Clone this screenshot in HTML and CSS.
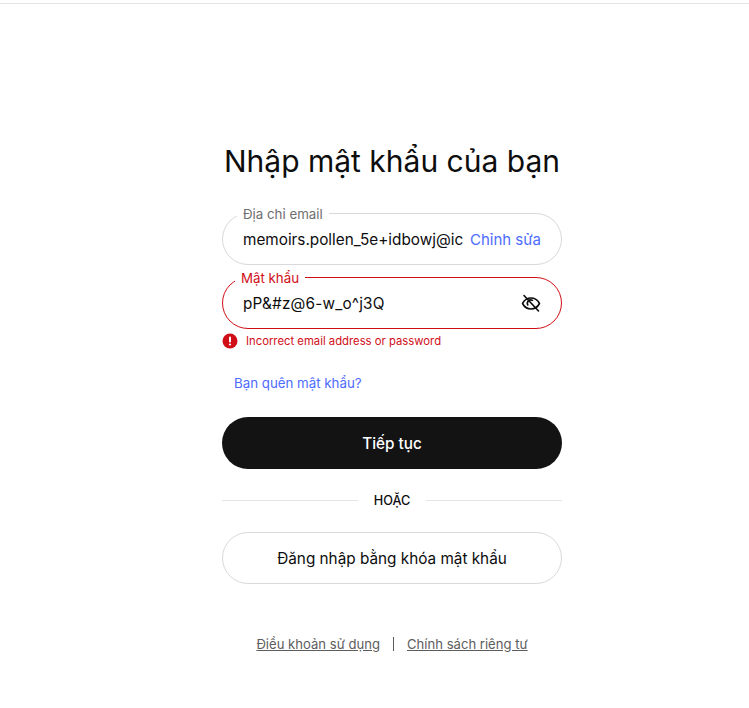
FILE: index.html
```html
<!DOCTYPE html>
<html lang="vi">
  <head>
    <meta charset="UTF-8" />
    <meta name="viewport" content="width=device-width, initial-scale=1.0" />
    <link rel="stylesheet" href="styles.css">
    <title>Nhập mật khẩu của bạn</title>
  </head>
  <body>
    <div class="top-line"></div>
    <main class="login">
      <h1 class="title">Nhập mật khẩu của bạn</h1>

      <div class="field">
        <span class="field-label">Địa chỉ email</span>
        <span class="field-value">memoirs.pollen_5e+idbowj@ic</span>
        <a class="link edit" href="#">Chỉnh sửa</a>
      </div>

      <div class="field field-error">
        <span class="field-label">Mật khẩu</span>
        <span class="field-value password">pP&amp;#z@6-w_o^j3Q</span>
        <svg class="eye" viewBox="0 0 20 20" width="20" height="20" fill="none" stroke="#0d0d0d" stroke-width="1.6" stroke-linecap="round" stroke-linejoin="round">
          <path d="M1.500 10.500C3.500 6.800 6.500 5 10 5s6.500 1.800 8.500 5.500c-2 3.700-5 5.500-8.500 5.500s-6.500-1.800-8.500-5.500z" />
          <path d="M6.800 12A3.400 3.400 0 0 1 11.500 7.400" />
          <path d="M3 2.500l14.500 15.500" />
        </svg>
      </div>

      <div class="error">
        <svg class="error-icon" viewBox="0 0 16 16" width="16" height="16">
          <circle cx="8" cy="8" r="7.500" fill="#d00e17" />
          <rect x="7" y="3.500" width="2" height="6" rx="1" fill="#fff" />
          <circle cx="8" cy="11.500" r="1.100" fill="#fff" />
        </svg>
        <span>Incorrect email address or password</span>
      </div>

      <a class="link forgot" href="#">Bạn quên mật khẩu?</a>

      <button class="btn btn-dark">Tiếp tục</button>

      <div class="divider"><span>HOẶC</span></div>

      <button class="btn btn-light">Đăng nhập bằng khóa mật khẩu</button>

      <footer class="footer">
        <a href="#">Điều khoản sử dụng</a>
        <span class="sep"></span>
        <a href="#">Chính sách riêng tư</a>
      </footer>
    </main>
  </body>
</html>
```

FILE: styles.css
```css
html,
body {
  margin: 0;
  padding: 0;
  background: #fff;
  font-family: Inter, "Liberation Sans", sans-serif;
  color: #0d0d0d;
}

.top-line {
  height: 3px;
  border-bottom: 1px solid #e3e3e3;
}

.login {
  width: 340px;
  margin-left: 222px;
  display: flex;
  flex-direction: column;
}

.title {
  margin: 138px -10px 0;
  font-size: 30px;
  line-height: 38px;
  font-weight: 400;
  text-align: center;
  white-space: nowrap;
}

.field {
  position: relative;
  box-sizing: border-box;
  height: 52px;
  margin-top: 33px;
  padding: 0 20px;
  display: flex;
  align-items: center;
  justify-content: space-between;
  border: 1px solid #d9d9d9;
  border-radius: 26px;
  font-size: 15.300px;
}

.field-error {
  margin-top: 12px;
  border-color: #d00e17;
}

.field-label {
  position: absolute;
  top: -8px;
  left: 14px;
  padding: 0 6px;
  background: #fff;
  font-size: 13.300px;
  line-height: 16px;
  color: #6e6e6e;
}

.field-error .field-label {
  left: 12px;
  color: #d00e17;
}

.field-value {
  white-space: nowrap;
}

.password {
  letter-spacing: 0.2px;
}

.link {
  color: #4d6bfe;
  text-decoration: none;
}

.edit {
  font-size: 15px;
  white-space: nowrap;
}

.eye {
  display: block;
}

.error {
  display: flex;
  align-items: center;
  gap: 8px;
  margin-top: 4px;
  height: 16px;
  font-size: 11.300px;
  color: #d00e17;
}

.forgot {
  margin: 26px 0 0 12px;
  font-size: 13.300px;
  line-height: 16px;
}

.btn {
  box-sizing: border-box;
  height: 52px;
  border-radius: 26px;
  font-family: inherit;
  font-size: 15.300px;
  cursor: pointer;
}

.btn-dark {
  margin-top: 26px;
  border: 0;
  background: #131313;
  color: #fff;
  font-weight: 500;
}

.btn-light {
  margin-top: 23px;
  border: 1px solid #d9d9d9;
  background: #fff;
  color: #0d0d0d;
}

.divider {
  display: flex;
  align-items: center;
  gap: 16px;
  margin-top: 23px;
  height: 17px;
  font-size: 12.700px;
  font-weight: 500;
}

.divider::before,
.divider::after {
  content: "";
  flex: 1;
  height: 1px;
  background: #e3e3e3;
}

.footer {
  display: flex;
  justify-content: center;
  align-items: center;
  gap: 13px;
  margin-top: 52px;
  font-size: 13.100px;
  line-height: 16px;
}

.footer a {
  color: #5d5d5d;
}

.sep {
  width: 1px;
  height: 14px;
  background: #5d5d5d;
}
```
